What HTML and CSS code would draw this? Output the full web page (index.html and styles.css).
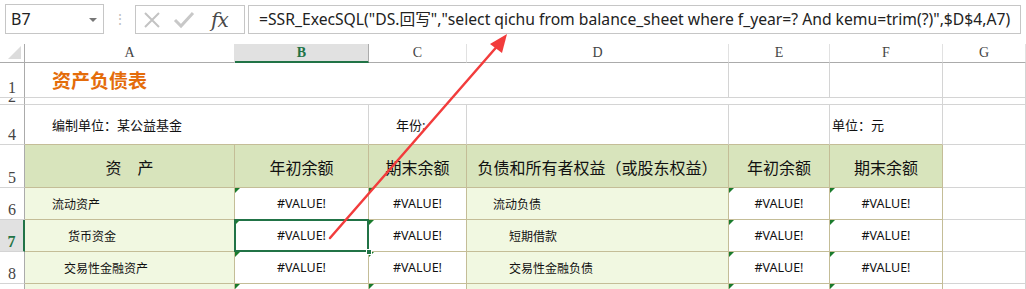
FILE: index.html
```html
<!DOCTYPE html>
<html lang="zh-CN">
<head>
  <meta charset="UTF-8">
  <title>资产负债表 - Excel</title>
  <link rel="stylesheet" href="styles.css">
</head>
<body>

  <div class="formula-bar">
    <div class="name-box">
      <span>B7</span>
      <span class="drop"></span>
    </div>
    <div class="grip">⋮</div>
    <div class="fx-buttons">
      <svg class="btn-x" width="20" height="20" viewBox="0 0 20 20"><path d="M3 3 L17 17 M17 3 L3 17" stroke="#c3c3c3" stroke-width="2" fill="none"/></svg>
      <svg class="btn-ok" width="22" height="20" viewBox="0 0 22 20"><path d="M2 10 L8 16 L20 3" stroke="#c8c8c8" stroke-width="3" fill="none"/></svg>
      <span class="fx">fx</span>
    </div>
    <div class="formula-input">=SSR_ExecSQL("DS.回写","select qichu from balance_sheet where f_year=? And kemu=trim(?)",$D$4,A7)</div>
  </div>

  <div class="sheet">
    <!-- column headers -->
    <div class="corner"><span></span></div>
    <div class="col-hd">A</div>
    <div class="col-hd active">B</div>
    <div class="col-hd">C</div>
    <div class="col-hd">D</div>
    <div class="col-hd">E</div>
    <div class="col-hd">F</div>
    <div class="col-hd">G</div>

    <!-- row 1 -->
    <div class="row-hd">1</div>
    <div class="cell span-4 title">资产负债表</div>
    <div class="cell"></div>
    <div class="cell"></div>
    <div class="cell"></div>

    <!-- row 2 (row 3 is hidden) -->
    <div class="row-hd tiny"><span>2</span></div>
    <div class="cell span-6"></div>
    <div class="cell"></div>

    <!-- row 4 -->
    <div class="row-hd">4</div>
    <div class="cell span-2 note above">编制单位：某公益基金</div>
    <div class="cell note above">年份:</div>
    <div class="cell above"></div>
    <div class="cell above"></div>
    <div class="cell note unit above">单位：元</div>
    <div class="cell"></div>

    <!-- row 5 -->
    <div class="row-hd">5</div>
    <div class="cell th">资　产</div>
    <div class="cell th">年初余额</div>
    <div class="cell th">期末余额</div>
    <div class="cell th">负债和所有者权益（或股东权益）</div>
    <div class="cell th">年初余额</div>
    <div class="cell th">期末余额</div>
    <div class="cell"></div>

    <!-- row 6 -->
    <div class="row-hd">6</div>
    <div class="cell item lv1">流动资产</div>
    <div class="cell val">#VALUE!</div>
    <div class="cell val">#VALUE!</div>
    <div class="cell item lv1 right-side">流动负债</div>
    <div class="cell val">#VALUE!</div>
    <div class="cell val">#VALUE!</div>
    <div class="cell"></div>

    <!-- row 7 -->
    <div class="row-hd active">7</div>
    <div class="cell item lv2">货币资金</div>
    <div class="cell val selected">#VALUE!<span class="handle"></span></div>
    <div class="cell val">#VALUE!</div>
    <div class="cell item lv2 right-side">短期借款</div>
    <div class="cell val">#VALUE!</div>
    <div class="cell val">#VALUE!</div>
    <div class="cell"></div>

    <!-- row 8 -->
    <div class="row-hd">8</div>
    <div class="cell item lv3">交易性金融资产</div>
    <div class="cell val">#VALUE!</div>
    <div class="cell val">#VALUE!</div>
    <div class="cell item lv2 right-side">交易性金融负债</div>
    <div class="cell val">#VALUE!</div>
    <div class="cell val">#VALUE!</div>
    <div class="cell"></div>

    <!-- row 9 -->
    <div class="row-hd"></div>
    <div class="cell item"></div>
    <div class="cell val"></div>
    <div class="cell val"></div>
    <div class="cell item"></div>
    <div class="cell val"></div>
    <div class="cell val"></div>
    <div class="cell"></div>
  </div>

  <svg class="arrow" width="1026" height="289" viewBox="0 0 1026 289">
    <line x1="330" y1="238" x2="500" y2="43" stroke="#f23c3c" stroke-width="2.5" stroke-linecap="round"/>
    <polygon points="507,34 490,44 502,53" fill="#f23c3c"/>
  </svg>

</body>
</html>
```

FILE: styles.css
```css
* {
  box-sizing: border-box;
  margin: 0;
  padding: 0;
}

body {
  width: 1026px;
  height: 289px;
  overflow: hidden;
  background: #fff;
  font-family: 'Noto Sans', 'Noto Sans CJK SC', sans-serif;
  color: #111;
  position: relative;
}

/* ---------- formula bar ---------- */

.formula-bar {
  height: 44px;
  display: flex;
  align-items: flex-start;
  padding: 4px 0 0 5px;
}

.name-box {
  width: 99px;
  height: 30px;
  border: 1px solid #c6c6c6;
  display: flex;
  align-items: center;
  justify-content: space-between;
  padding: 0 6px 0 5px;
  font-size: 16px;
  color: #222;
}

.name-box .drop {
  width: 0;
  height: 0;
  border-left: 4px solid transparent;
  border-right: 4px solid transparent;
  border-top: 4px solid #777;
  margin-top: 2px;
}

.grip {
  width: 31px;
  text-align: center;
  color: #c0c0c0;
  font-size: 14px;
  line-height: 30px;
}

.fx-buttons {
  width: 110px;
  height: 29px;
  margin-top: 1px;
  border: 1px solid #c6c6c6;
  display: flex;
  align-items: center;
  padding-left: 6px;
}

.btn-x {
  margin-right: 11px;
}

.btn-ok {
  margin-right: 16px;
}

.fx {
  font-family: 'DejaVu Serif', 'Liberation Serif', serif;
  font-style: italic;
  font-size: 20px;
  color: #4a4a4a;
  letter-spacing: -1px;
}

.formula-input {
  width: 773px;
  height: 29px;
  margin: 1px 0 0 3px;
  border: 1px solid #c6c6c6;
  padding-left: 10px;
  font-size: 15.7px;
  line-height: 26px;
  color: #222;
  white-space: nowrap;
  overflow: hidden;
}

/* ---------- grid ---------- */

.sheet {
  display: grid;
  grid-template-columns: 25px 210px 134px 98px 262px 101px 113px 83px;
  grid-template-rows: 19px 35px 7px 40px 43px 32px 32px 32px 32px;
}

.corner {
  border-right: 1px solid #ababab;
  border-bottom: 1px solid #ababab;
  position: relative;
}

.corner span {
  position: absolute;
  right: 3px;
  bottom: 3px;
  width: 0;
  height: 0;
  border-left: 13px solid transparent;
  border-bottom: 13px solid #dcdcdc;
}

.col-hd {
  border-right: 1px solid #e1e1e1;
  border-bottom: 1px solid #ababab;
  font-family: 'Liberation Serif', serif;
  font-size: 14px;
  color: #444;
  text-align: center;
  line-height: 18px;
}

.col-hd.active {
  background: #e1e1e1;
  color: #217346;
  font-weight: bold;
  border-bottom: 2px solid #217346;
  border-right-color: #ababab;
}

.row-hd {
  border-right: 1px solid #ababab;
  border-bottom: 1px solid #d4d4d4;
  font-family: 'Liberation Serif', serif;
  font-size: 16px;
  color: #444;
  display: flex;
  align-items: flex-end;
  justify-content: center;
  line-height: 16px;
  padding-bottom: 1px;
  overflow: hidden;
}

.row-hd.tiny {
  padding-bottom: 0;
  align-items: flex-start;
}

.row-hd.tiny span {
  margin-top: -9px;
}

.row-hd.active {
  background: #e1e1e1;
  color: #217346;
  font-weight: bold;
  border-right: 2px solid #217346;
}

.cell {
  border-right: 1px solid #d4d4d4;
  border-bottom: 1px solid #d4d4d4;
  font-size: 12px;
  display: flex;
  align-items: center;
  white-space: nowrap;
  position: relative;
}

.span-2 { grid-column: span 2; }
.span-4 { grid-column: span 4; }
.span-6 { grid-column: span 6; }

.title {
  font-size: 19px;
  font-weight: bold;
  color: #e46c0a;
  padding-left: 27px;
}

.note {
  font-size: 13px;
  padding-left: 27px;
}

.note.unit {
  padding-left: 2px;
}

.cell.above {
  border-bottom-color: #c4bd97;
}

/* ---------- balance table ---------- */

.th {
  background: #d8e4bc;
  border-color: #c4bd97;
  justify-content: center;
  font-size: 16px;
  padding-top: 1px;
}

.item {
  background: #f1f8e1;
  border-color: #c4bd97;
}

.lv1 { padding-left: 27px; }
.lv2 { padding-left: 43px; }
.lv3 { padding-left: 39px; }

.right-side.lv1 { padding-left: 26px; }
.right-side.lv2 { padding-left: 42px; }

.val {
  background: #fff;
  border-color: #c4bd97;
  justify-content: center;
  font-size: 12.5px;
}

.val::before {
  content: "";
  position: absolute;
  left: 0;
  top: 0;
  width: 0;
  height: 0;
  border-top: 5px solid #1a7b2c;
  border-right: 5px solid transparent;
}

.selected {
  z-index: 2;
}

.selected::after {
  content: "";
  position: absolute;
  left: -1px;
  top: -1px;
  right: -1px;
  bottom: -1px;
  border: 2px solid #217346;
}

.selected .handle {
  position: absolute;
  right: -4px;
  bottom: -4px;
  width: 6px;
  height: 6px;
  background: #217346;
  border: 1px solid #fff;
  z-index: 1;
}

/* ---------- overlay ---------- */

.arrow {
  position: absolute;
  left: 0;
  top: 0;
  z-index: 5;
  pointer-events: none;
}
```
